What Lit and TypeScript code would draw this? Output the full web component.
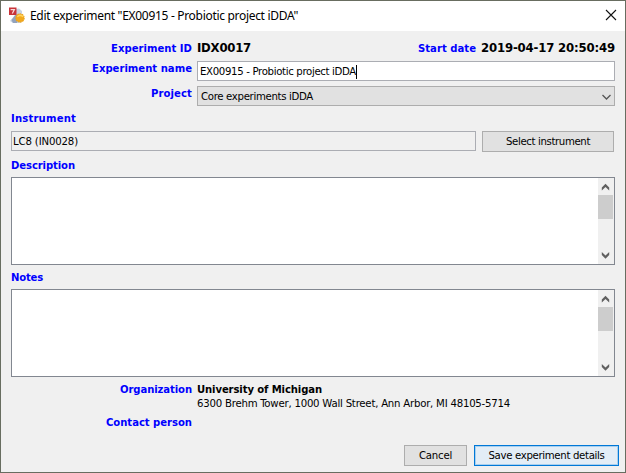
import { LitElement, html, css } from "lit";
import { customElement, property } from "lit/decorators.js";

/** A single line of text whose tracking is adjusted to span a set width. */
@customElement("ui-text")
class UiText extends LitElement {
  @property() text = "";
  @property({ type: Number }) span = 0;

  static styles = css`
    :host { display: inline-block; white-space: pre; flex: none; }
    .run { display: inline-block; }
  `;

  render() {
    return html`<span class="run">${this.text}</span>`;
  }

  updated() {
    const run = this.renderRoot.querySelector<HTMLElement>(".run");
    if (!run || !this.span) return;
    run.style.letterSpacing = "0";
    const natural = run.getBoundingClientRect().width;
    run.style.letterSpacing = `${(this.span - natural) / this.text.length}px`;
  }
}

@customElement("memo-box")
class MemoBox extends LitElement {
  static styles = css`
    :host { display: block; }
    .box { box-sizing: border-box; height: 88px; border: 1px solid #828790; background: #fff; display: flex; justify-content: flex-end; }
    .bar { width: 16px; background: #f0f0f0; display: flex; flex-direction: column; }
    .arrow { width: 15px; height: 17px; display: block; }
    .thumb { width: 15px; height: 24px; background: #cdcdcd; }
    .gap { flex: 1; }
    path { fill: #606060; }
  `;

  render() {
    return html`<div class="box"><div class="bar">
      <svg class="arrow" viewBox="0 0 15 17"><path d="M3.8 9.5 7.5 5.8 11.2 9.5V12.4L7.5 8.9 3.8 12.4z" /></svg>
      <div class="thumb"></div><div class="gap"></div>
      <svg class="arrow" viewBox="0 0 15 17"><path d="M3.8 8V5.1L7.5 8.6 11.2 5.1V8L7.5 11.7z" /></svg>
    </div></div>`;
  }
}

@customElement("app-root")
class AppRoot extends LitElement {
  static styles = css`
    :host { display: block; width: 626px; height: 473px; overflow: hidden; background: #686d60; font: 11.3px/14px "DejaVu Sans Condensed", "DejaVu Sans", sans-serif; color: #000; }
    * { box-sizing: border-box; }
    .window { margin: 1px 1px 0; height: 471px; background: #f0f0f0; display: flex; flex-direction: column; }
    .title { height: 30px; flex: none; background: #fff; display: flex; align-items: center; padding: 0 8px 0 7px; font: 12px/16px "Noto Sans", sans-serif; }
    .logo { width: 18px; height: 18px; margin-right: 4px; }
    .close { width: 12px; height: 12px; margin-left: auto; margin-bottom: 2px; }
    .close path { stroke: #111; stroke-width: 1.1; fill: none; }
    .body { flex: 1; padding: 0 10px; display: flex; flex-direction: column; }
    .label { color: #0000ff; font-weight: bold; font-size: 11.2px; line-height: 15px; }
    .strong { font-weight: bold; font-size: 11.2px; line-height: 15px; }
    .big { font-size: 13px; font-weight: bold; }
    .row { display: grid; grid-template-columns: 181px 418px; column-gap: 5px; justify-items: end; }
    .row .value { justify-self: stretch; }
    .ids { height: 30px; padding-top: 10px; }
    .ids .value { display: flex; }
    .start { margin-left: auto; margin-right: 5px; }
    .name { height: 25px; }
    .project { height: 25px; }
    .input { height: 20px; border: 1px solid #abadb3; background: #fff; display: flex; align-items: center; padding: 1px 2px 0; }
    .caret { width: 1px; height: 14px; background: #000; }
    .select { height: 20px; border: 1px solid #adadad; background: #e1e1e1; display: flex; align-items: center; padding: 1px 3px 0; }
    .chevron { width: 9px; height: 6px; margin-left: auto; }
    .chevron path { stroke: #555; fill: none; stroke-width: 1.3; }
    .heading { display: flex; height: 14px; }
    .instrument { display: flex; gap: 6px; margin-top: 6px; height: 21px; }
    .readonly { width: 465px; height: 20px; border: 1px solid #abadb3; display: flex; align-items: center; padding: 1px 0 0 1px; }
    .button { height: 21px; border: 1px solid #adadad; background: #e1e1e1; display: flex; align-items: center; justify-content: center; }
    .pick { width: 132px; }
    .h-desc { margin-top: 6px; }
    .memo { margin-top: 5px; }
    .h-notes { margin-top: 5px; }
    .org { margin-top: 5px; grid-auto-rows: 14px; }
    .org .value { justify-self: start; }
    .address { line-height: 15px; }
    .contact { margin-top: 5px; }
    .actions { display: flex; justify-content: flex-end; gap: 7px; margin-top: auto; margin-bottom: 6px; margin-right: -4px; }
    .cancel { width: 63px; }
    .save { width: 145px; background: #e3edf6; border-color: #0078d7; box-shadow: inset 0 0 0 1px #a9d0ef; }
  `;

  render() {
    return html`<div class="window">
      <div class="title">
        <svg class="logo" viewBox="0 0 18 18">
          <path d="M8 2 11 1.5 14 4v5l-1 7H5l-3-2 5-6z" fill="#c9d3e2" />
          <path d="M3.5 13 8 7l3 3-2 6H5z" fill="#93a3bd" />
          <path d="M1 .5h7.5v7.5H1z" fill="#c83338" />
          <path d="M2.6 2.6h3.8L4.3 6.5" fill="none" stroke="#f7dadb" stroke-width="1.2" />
          <circle cx="12" cy="11" r="4.1" fill="#f2a91e" stroke="#eba31c" stroke-width="1.3" stroke-dasharray="1.5 .8" />
          <path d="M9.2 9.8q3-2.8 6 0" fill="none" stroke="#ffd45b" stroke-width="1.5" />
        </svg>
        <ui-text text='Edit experiment "EX00915 - Probiotic project iDDA"' span="268"></ui-text>
        <svg class="close" viewBox="0 0 12 12"><path d="M1 1 11 11M11 1 1 11" /></svg>
      </div>
      <div class="body">
        <div class="row ids">
          <ui-text class="label" text="Experiment ID" span="81"></ui-text>
          <div class="value">
            <ui-text class="big" text="IDX0017" span="54"></ui-text>
            <ui-text class="label start" text="Start date" span="58"></ui-text>
            <ui-text class="big" text="2019-04-17 20:50:49" span="134"></ui-text>
          </div>
        </div>
        <div class="row name">
          <ui-text class="label" text="Experiment name" span="100"></ui-text>
          <div class="value input">
            <ui-text text="EX00915 - Probiotic project iDDA" span="156"></ui-text><span class="caret"></span>
          </div>
        </div>
        <div class="row project">
          <ui-text class="label" text="Project" span="41"></ui-text>
          <div class="value select">
            <ui-text text="Core experiments iDDA" span="112"></ui-text>
            <svg class="chevron" viewBox="0 0 9 6"><path d="M.5 1 4.5 5 8.5 1" /></svg>
          </div>
        </div>
        <div class="heading"><ui-text class="label" text="Instrument" span="65"></ui-text></div>
        <div class="instrument">
          <div class="readonly"><ui-text text="LC8 (IN0028)" span="65"></ui-text></div>
          <div class="button pick"><ui-text text="Select instrument" span="84"></ui-text></div>
        </div>
        <div class="heading h-desc"><ui-text class="label" text="Description" span="64"></ui-text></div>
        <memo-box class="memo"></memo-box>
        <div class="heading h-notes"><ui-text class="label" text="Notes" span="32"></ui-text></div>
        <memo-box class="memo"></memo-box>
        <div class="row org">
          <ui-text class="label" text="Organization" span="72"></ui-text>
          <ui-text class="value strong" text="University of Michigan" span="125"></ui-text>
          <span></span>
          <ui-text class="value address" text="6300 Brehm Tower, 1000 Wall Street, Ann Arbor, MI 48105-5714" span="313"></ui-text>
        </div>
        <div class="row contact"><ui-text class="label" text="Contact person" span="86"></ui-text></div>
        <div class="actions">
          <div class="button cancel"><ui-text text="Cancel" span="33"></ui-text></div>
          <div class="button save"><ui-text text="Save experiment details" span="116"></ui-text></div>
        </div>
      </div>
    </div>`;
  }
}
